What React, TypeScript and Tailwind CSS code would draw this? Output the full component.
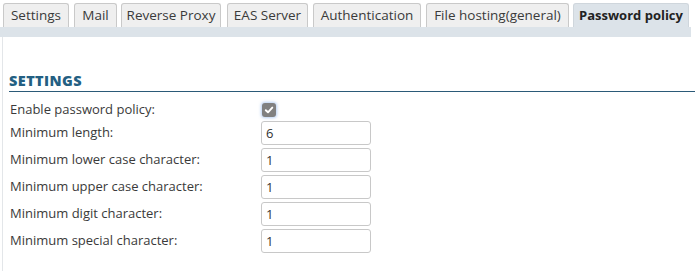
const tabs = [
  { name: "Settings", c: "w-[66px] ml-[3px]" },
  { name: "Mail", c: "w-[43px] ml-[5px]" },
  { name: "Reverse Proxy", c: "w-[100px] ml-[4px]" },
  { name: "EAS Server", c: "w-[81px] ml-[6px]" },
  { name: "Authentication", c: "w-[108px] ml-[5px]" },
  { name: "File hosting(general)", c: "w-[143px] ml-[5px]" },
  { name: "Password policy", c: "w-[116px] ml-[4px]" },
];

const fields = [
  { label: "Minimum length:", value: "6" },
  { label: "Minimum lower case character:", value: "1" },
  { label: "Minimum upper case character:", value: "1" },
  { label: "Minimum digit character:", value: "1" },
  { label: "Minimum special character:", value: "1" },
];

export default function App() {
  return (
    <div className="w-[695px] h-[271px] bg-white font-['Open_Sans',sans-serif] text-[13px] text-[#3a3a3a] overflow-hidden">
      <div className="flex items-end pt-[3px]">
        {tabs.map((t) => {
          const active = t.name === "Password policy";
          return (
            <div
              key={t.name}
              className={
                active
                  ? `${t.c} h-[24px] flex items-center justify-center whitespace-nowrap rounded-t-[3px] border border-b-0 border-[#cfd6dc] bg-[#dce3e9] font-bold text-[#222]`
                  : `${t.c} h-[24px] flex items-center justify-center whitespace-nowrap rounded-t-[3px] border border-b-0 border-[#c9c9c9] bg-[#efefef] text-[13.5px]`
              }
            >
              {t.name}
            </div>
          );
        })}
      </div>
      <div className="h-[10px] w-[691px] bg-[#dce3e9]" />
      <div className="ml-[2px] border-l border-[#e3e6e9] h-[234px] pt-[35px] pl-[6px]">
        <div className="border-b border-[#2b5a78] pb-[1px] text-[14.5px] font-extrabold tracking-[0.4px] text-[#235f82] leading-[18px]">
          SETTINGS
        </div>
        <div className="mt-[10px] flex items-center h-[16px]">
          <span className="w-[253px] pl-[1px]">Enable password policy:</span>
          <span className="w-[14px] h-[14px] rounded-[3px] bg-[#808080] flex items-center justify-center shadow-[0_0_3px_1px_rgba(110,160,230,0.5)]">
            <svg width="10" height="10" viewBox="0 0 10 10">
              <path d="M1.8 5.2 L4 7.3 L8.3 2.6" stroke="white" strokeWidth="1.9" fill="none" strokeLinecap="round" strokeLinejoin="round" />
            </svg>
          </span>
        </div>
        <div className="mt-[3px] flex flex-col gap-[3px]">
          {fields.map((f) => (
            <div key={f.label} className="flex items-center h-[24px]">
              <span className="w-[252px] pl-[1px]">{f.label}</span>
              <input
                readOnly
                value={f.value}
                className="w-[110px] h-[24px] border border-[#c8c8c8] rounded-[3px] px-[4px] text-[13px] text-[#333] outline-none"
              />
            </div>
          ))}
        </div>
      </div>
    </div>
  );
}
